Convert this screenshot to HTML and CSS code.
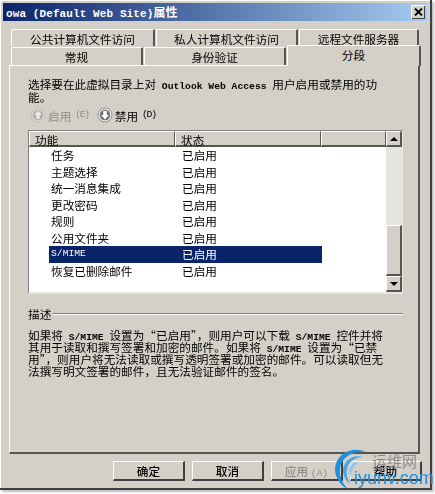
FILE: index.html
```html
<!DOCTYPE html>
<html lang="zh-CN">
<head>
  <meta charset="UTF-8">
  <title>owa (Default Web Site)属性</title>
  <link rel="stylesheet" href="styles.css">
</head>
<body>
  <div class="window">
    <div class="titlebar">
      <span class="title"><span class="latin">owa (Default Web Site)</span>属性</span>
      <span class="close">
        <svg width="9" height="8" viewBox="0 0 9 8"><path d="M1 0.5 L8 7.5 M8 0.5 L1 7.5" stroke="#000" stroke-width="1.8" fill="none"/></svg>
      </span>
    </div>

    <!-- Tabs -->
    <div class="tab-row tab-row-back">
      <div class="tab w144">公共计算机文件访问</div>
      <div class="tab w142">私人计算机文件访问</div>
      <div class="tab w120">远程文件服务器</div>
    </div>
    <div class="tab-row tab-row-front">
      <div class="tab w132">常规</div>
      <div class="tab w142">身份验证</div>
      <div class="tab tab-active">分段</div>
    </div>

    <div class="panel">
      <p class="intro">选择要在此虚拟目录上对<span class="latin"> Outlook Web Access </span>用户启用或禁用的功<br>能。</p>

      <div class="actions">
        <span class="action disabled">
          <svg class="round-icon" width="16" height="16" viewBox="0 0 16 16"><circle cx="8" cy="8" r="7" fill="#dedbd5" stroke="#bdbab3"/><circle cx="8" cy="8" r="5.200" fill="#b0ada6"/><path d="M8 3.500 L12 8 H9.800 V12 H6.200 V8 H4 Z" fill="#e8e6e2"/></svg>
          <span>启用</span><span class="latin">(E)</span>
        </span>
        <span class="action">
          <svg class="round-icon" width="16" height="16" viewBox="0 0 16 16"><circle cx="8" cy="8" r="7" fill="#eceae6" stroke="#8f8d88"/><circle cx="8" cy="8" r="5.200" fill="#6d6b6b"/><path d="M8 12.500 L12 8 H9.800 V4 H6.200 V8 H4 Z" fill="#fff"/></svg>
          <span>禁用</span><span class="latin">(D)</span>
        </span>
      </div>

      <div class="list">
        <div class="list-main">
          <div class="list-head">
            <div class="head-cell col-name">功能</div>
            <div class="head-cell col-state">状态</div>
            <div class="head-cell col-rest"></div>
          </div>
          <div class="rows">
            <div class="row"><span class="cell-name">任务</span><span class="cell-state">已启用</span></div>
            <div class="row"><span class="cell-name">主题选择</span><span class="cell-state">已启用</span></div>
            <div class="row"><span class="cell-name">统一消息集成</span><span class="cell-state">已启用</span></div>
            <div class="row"><span class="cell-name">更改密码</span><span class="cell-state">已启用</span></div>
            <div class="row"><span class="cell-name">规则</span><span class="cell-state">已启用</span></div>
            <div class="row"><span class="cell-name">公用文件夹</span><span class="cell-state">已启用</span></div>
            <div class="row selected"><span class="cell-name latin">S/MIME</span><span class="cell-state">已启用</span></div>
            <div class="row"><span class="cell-name">恢复已删除邮件</span><span class="cell-state">已启用</span></div>
          </div>
        </div>
        <div class="scrollbar">
          <div class="scroll-btn"><span class="arrow-up"></span></div>
          <div class="scroll-track"></div>
          <div class="scroll-thumb"></div>
          <div class="scroll-btn"><span class="arrow-down"></span></div>
        </div>
      </div>

      <div class="desc-head"><span>描述</span><span class="desc-line"></span></div>
      <p class="desc">如果将<span class="latin"> S/MIME </span>设置为“已启用”，则用户可以下载<span class="latin"> S/MIME </span>控件并将<br>其用于读取和撰写签署和加密的邮件。如果将<span class="latin"> S/MIME </span>设置为“已禁<br>用”，则用户将无法读取或撰写透明签署或加密的邮件。可以读取但无<br>法撰写明文签署的邮件，且无法验证邮件的签名。</p>
    </div>

    <div class="buttons">
      <div class="btn">确定</div>
      <div class="btn">取消</div>
      <div class="btn btn-disabled">应用 <span class="latin">(A)</span></div>
      <div class="btn">帮助</div>
    </div>
  </div>

  <!-- watermark -->
  <div class="watermark">
    <svg class="wm-logo" width="40" height="44" viewBox="0 0 40 44">
      <path d="M33 5 C20 -1 3 6 2 22 C2 31 8 39 15 42 C9 36 6 29 7 21 C8 11 20 3 33 5 Z" fill="#1e8fdc"/>
      <path d="M30 10 C20 7 11 13 10 23 C10 29 13 34 17 37 C14 31 13 27 14 22 C15 15 22 10 30 10 Z" fill="#4aa6e6"/>
      <path d="M26 15 C21 14 17 18 16.500 23 C16.500 26 17 28 18 30 C18 25 19 19 26 15 Z" fill="#8cc6ee"/>
    </svg>
    <span class="wm-cn">运维网</span>
    <span class="wm-en">iyunv.com</span>
  </div>
</body>
</html>
```

FILE: styles.css
```css
/* Global */
html, body {
  margin: 0;
  padding: 0;
  background: #fff;
}

body {
  width: 435px;
  height: 494px;
  overflow: hidden;
  position: relative;
  font-family: "Noto Sans CJK SC", "Liberation Sans", sans-serif;
  font-size: 11.650px;
  color: #000;
}

.latin {
  font-family: "Liberation Mono", monospace;
  font-size: 9.700px;
  font-weight: bold;
  line-height: 0;
  white-space: pre;
}

/* Window */
.window {
  box-sizing: border-box;
  width: 432px;
  height: 490px;
  padding: 3px 3px 0 3px;
  display: flex;
  flex-direction: column;
  background: #d4d0c8;
  border-right: 2px solid #404040;
  border-bottom: 2px solid #404040;
  box-shadow: inset 1px 1px 0 #fff, 2px 2px 2px rgba(0, 0, 0, 0.25);
  filter: blur(0.35px);
}

.titlebar {
  height: 18px;
  flex: none;
  display: flex;
  align-items: center;
  justify-content: space-between;
  padding: 0 2px 0 3px;
  background: linear-gradient(90deg, #0a246a, #a6caf0);
}

.title {
  color: #fff;
  font-weight: bold;
  font-size: 12px;
  line-height: 18px;
  white-space: nowrap;
}

.title .latin {
  font-size: 11px;
  letter-spacing: 0.1px;
}

.close {
  width: 14px;
  height: 14px;
  display: flex;
  align-items: center;
  justify-content: center;
  background: #d4d0c8;
  box-shadow: inset 1px 1px 0 #fff, inset -1px -1px 0 #404040;
}

/* Tabs */
.tab-row {
  display: flex;
  flex: none;
  padding-left: 8px;
}

.tab-row-back {
  margin-top: 8px;
  height: 17px;
  gap: 1px;
}

.tab-row-front {
  margin-top: 1px;
  height: 18px;
  gap: 1px;
}

.tab {
  box-sizing: border-box;
  text-align: center;
  line-height: 18px;
  white-space: nowrap;
  border-top: 1px solid #fff;
  border-left: 1px solid #fff;
  border-right: 2px solid #555;
  border-radius: 2px 2px 0 0;
}

.w144 { width: 144px; }
.w142 { width: 142px; }
.w132 { width: 132px; }
.w120 { width: 120px; }

.tab-active {
  width: 134px;
  height: 21px;
  margin-top: -2px;
  line-height: 17px;
  background: #d4d0c8;
  position: relative;
  z-index: 1;
}

/* Panel */
.panel {
  box-sizing: border-box;
  height: 389px;
  flex: none;
  margin: 0 7px 0 6px;
  padding: 11px 15px 0 18px;
  border-top: 1px solid #fff;
  border-left: 1px solid #fff;
  border-right: 2px solid #555;
  border-bottom: 2px solid #555;
}

.intro {
  margin: 0;
  line-height: 13px;
  white-space: nowrap;
}

.actions {
  display: flex;
  gap: 8px;
  margin-top: 3px;
  height: 18px;
  padding-left: 2px;
}

.action {
  display: flex;
  align-items: center;
  gap: 2px;
  white-space: nowrap;
}

.action .latin {
  font-weight: normal;
  line-height: 16px;
  margin-left: 2px;
  letter-spacing: -1.300px;
}

.action.disabled {
  color: #8f8d88;
}

.round-icon {
  flex: none;
}

/* List */
.list {
  box-sizing: border-box;
  width: 375px;
  height: 164px;
  margin-top: 6px;
  display: flex;
  background: #fff;
  border-top: 1px solid #808080;
  border-left: 1px solid #808080;
  border-right: 1px solid #e8e6e2;
  border-bottom: 2px solid #e8e6e2;
}

.list-main {
  flex: 1;
  min-width: 0;
}

.list-head {
  display: flex;
  height: 16px;
}

.head-cell {
  box-sizing: border-box;
  background: #d4d0c8;
  line-height: 15px;
  padding-left: 5px;
  border-top: 1px solid #fff;
  border-left: 1px solid #fff;
  border-right: 1px solid #555;
  border-bottom: 2px solid #555;
}

.col-name { width: 146px; }
.col-state { width: 146px; }
.col-rest { flex: 1; }

.row {
  display: flex;
  height: 16.500px;
  line-height: 16px;
  margin-left: 20px;
  width: 273px;
}

.cell-name {
  width: 131px;
  padding-left: 2px;
}

.selected {
  background: #0a246a;
  color: #fff;
}

.selected .latin {
  line-height: 16px;
  font-weight: normal;
}

/* Scrollbar */
.scrollbar {
  width: 16px;
  flex: none;
  display: flex;
  flex-direction: column;
}

.scroll-btn {
  box-sizing: border-box;
  height: 16px;
  flex: none;
  display: flex;
  align-items: center;
  justify-content: center;
  background: #d4d0c8;
  border-top: 1px solid #fff;
  border-left: 1px solid #fff;
  border-right: 2px solid #555;
  border-bottom: 2px solid #555;
}

.arrow-up {
  border-left: 4px solid transparent;
  border-right: 4px solid transparent;
  border-bottom: 4px solid #000;
}

.arrow-down {
  border-left: 4px solid transparent;
  border-right: 4px solid transparent;
  border-top: 4px solid #000;
}

.scroll-track {
  height: 78px;
  flex: none;
  background: #e6e4df;
}

.scroll-thumb {
  box-sizing: border-box;
  flex: 1;
  background: #d4d0c8;
  border-top: 1px solid #fff;
  border-left: 1px solid #fff;
  border-right: 2px solid #555;
  border-bottom: 2px solid #555;
}

/* Description */
.desc-head {
  display: flex;
  align-items: center;
  gap: 2px;
  margin-top: 11px;
  height: 16px;
}

.desc-line {
  flex: 1;
  height: 1px;
  background: #808080;
  box-shadow: 0 1px 0 #fff;
}

.desc {
  margin: 8px 0 0 0;
  line-height: 12px;
  white-space: nowrap;
  font-feature-settings: "fwid";
}

/* Buttons */
.buttons {
  display: flex;
  gap: 7px;
  margin: 7px 5px 0 0;
  justify-content: flex-end;
}

.btn {
  box-sizing: border-box;
  width: 72px;
  height: 20px;
  text-align: center;
  line-height: 18px;
  font-weight: 500;
  border-top: 1px solid #fff;
  border-left: 1px solid #fff;
  border-right: 2px solid #404040;
  border-bottom: 2px solid #404040;
}

.btn-disabled {
  color: #8f8d88;
}

.btn-disabled .latin {
  font-weight: normal;
}

/* Watermark */
.watermark {
  position: absolute;
  left: 333px;
  top: 446px;
  width: 102px;
  height: 46px;
}

.wm-logo {
  position: absolute;
  left: 0;
  top: 1px;
}

.wm-cn {
  position: absolute;
  left: 39px;
  top: 6px;
  color: #8c8c8c;
  font-size: 15px;
  line-height: 18px;
  white-space: nowrap;
}

.wm-en {
  position: absolute;
  left: 21px;
  top: 21px;
  color: #1e8fdc;
  font-family: "Liberation Sans", sans-serif;
  font-size: 18px;
  line-height: 22px;
  white-space: nowrap;
}
```
